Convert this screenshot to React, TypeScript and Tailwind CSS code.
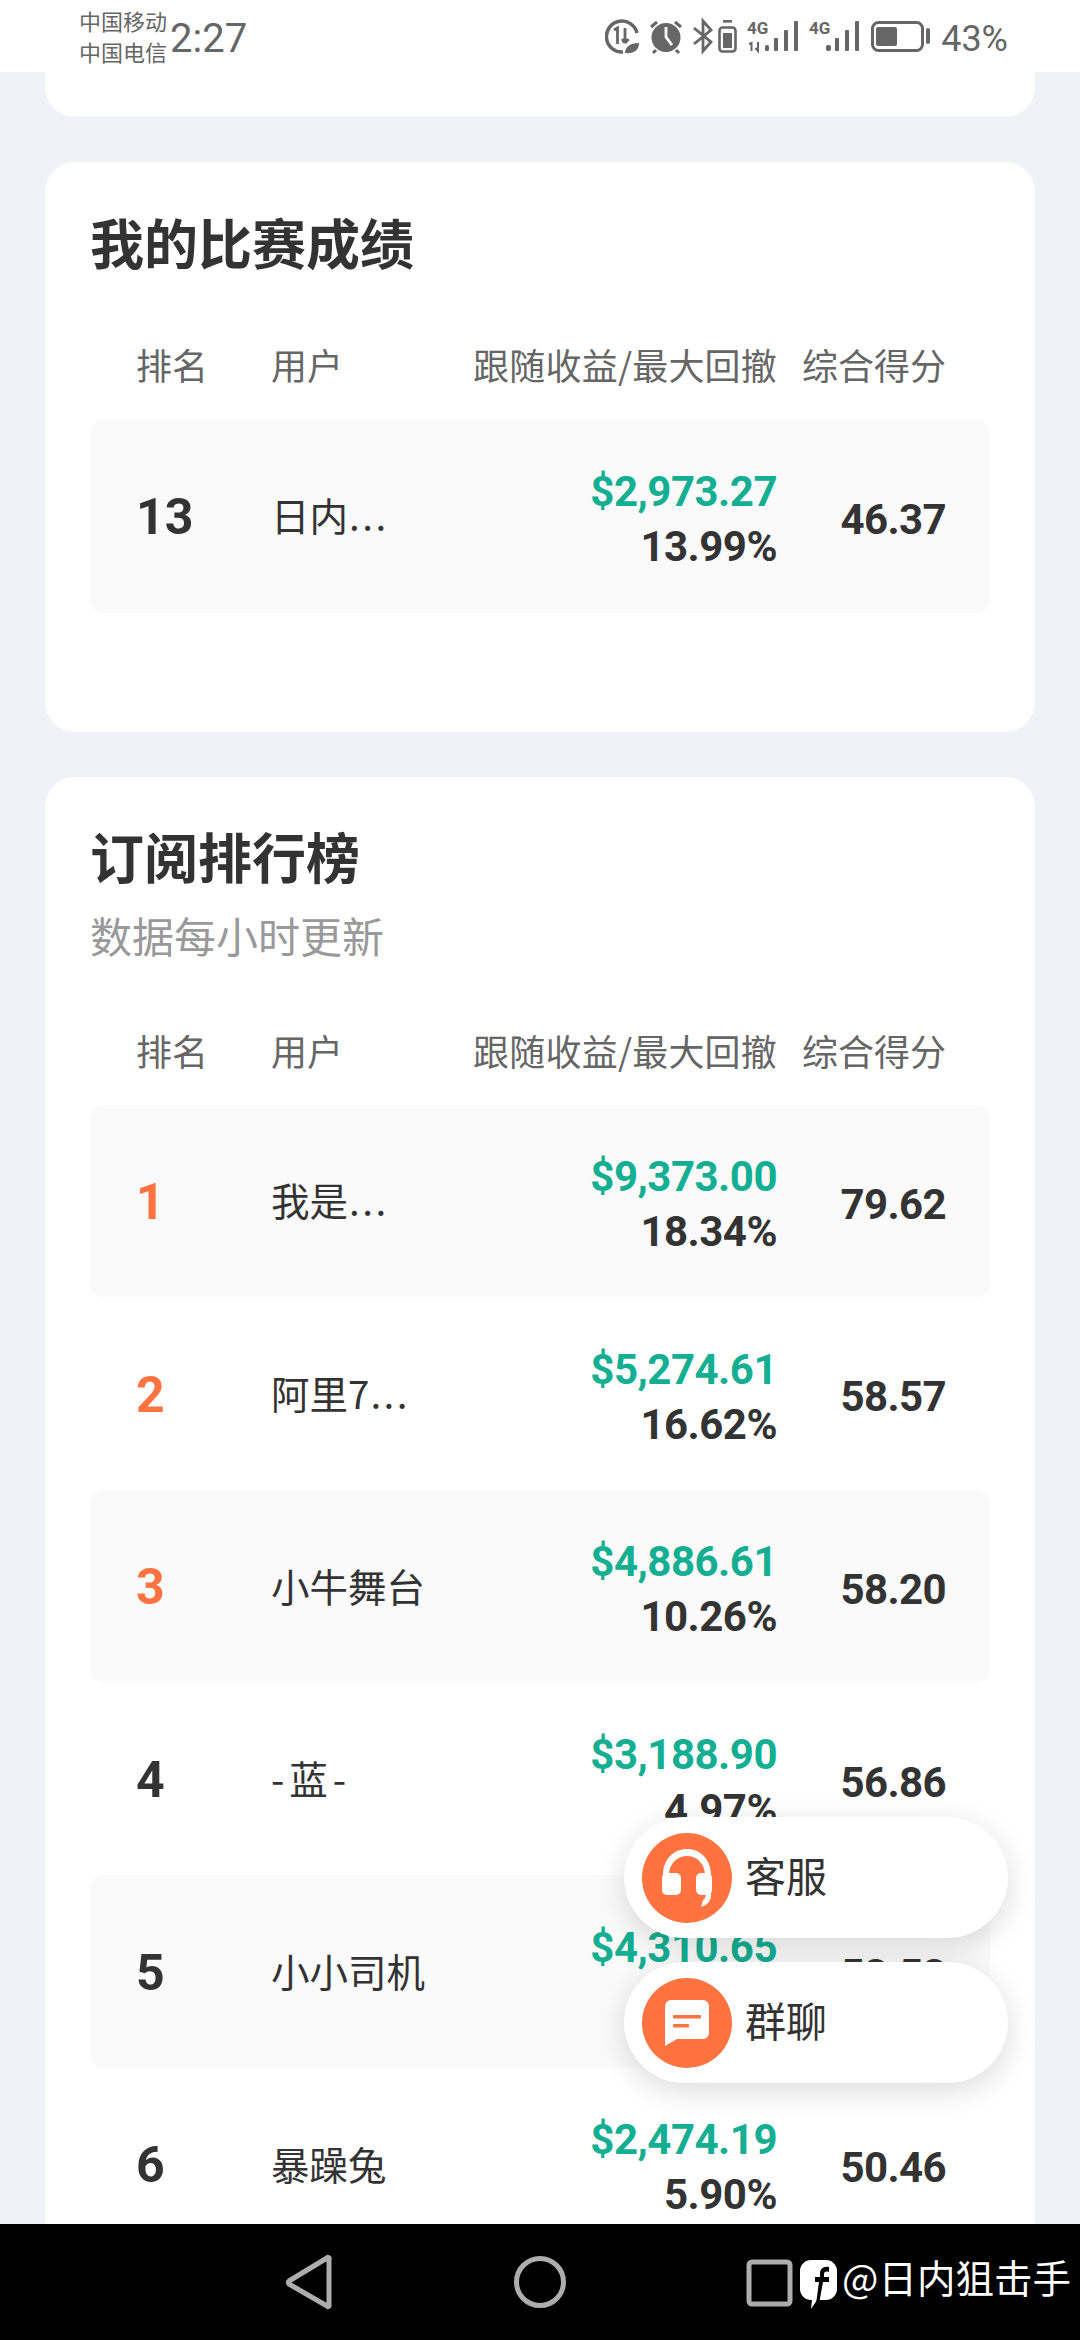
const num = { fontFamily: 'Roboto, "Noto Sans CJK SC", sans-serif' };

type Row = { rank: string; name: string; dots?: boolean; money: string; dd: string; score: string; top?: boolean };

const rows: Row[] = [
  { rank: '1', name: '我是', dots: true, money: '$9,373.00', dd: '18.34%', score: '79.62', top: true },
  { rank: '2', name: '阿里7', dots: true, money: '$5,274.61', dd: '16.62%', score: '58.57', top: true },
  { rank: '3', name: '小牛舞台', money: '$4,886.61', dd: '10.26%', score: '58.20', top: true },
  { rank: '4', name: '-蓝-', money: '$3,188.90', dd: '4.97%', score: '56.86' },
  { rank: '5', name: '小小司机', money: '$4,310.65', dd: '7.51%', score: '53.53' },
  { rank: '6', name: '暴躁兔', money: '$2,474.19', dd: '5.90%', score: '50.46' },
];

function Header() {
  return (
    <div className="grid grid-cols-[135px_190px_1fr_169px] pl-[46px] pr-[44px] h-[50px] items-center text-[36px] leading-[50px] text-[#666666] whitespace-nowrap">
      <div>排名</div>
      <div>用户</div>
      <div className="text-right tracking-[0.2px]">跟随收益/最大回撤</div>
      <div className="text-right">综合得分</div>
    </div>
  );
}

function TableRow({ r, shaded }: { r: Row; shaded: boolean }) {
  return (
    <div className={`grid grid-cols-[135px_190px_1fr_169px] pl-[46px] pr-[44px] h-[192.7px] items-center rounded-[14px] ${shaded ? 'bg-[#fafafa]' : ''}`}>
      <div className={`pt-[3px] text-[50px] font-bold ${r.top ? 'text-[#ff7340]' : 'text-[#333333]'}`} style={num}>{r.rank}</div>
      <div className={`pb-[2px] text-[38.5px] text-[#333333] whitespace-nowrap ${r.name === '-蓝-' ? 'tracking-[5px]' : ''}`}>
        {r.name}
        {r.dots ? <span className="ml-[1px] tracking-[2.5px]">...</span> : null}
      </div>
      <div className="pt-[6px] text-right font-bold text-[42px] leading-[55px] tracking-[-0.5px]" style={num}>
        <div className="text-[#14ae92]">{r.money}</div>
        <div className="text-[#333333]">{r.dd}</div>
      </div>
      <div className="pt-[6px] text-right font-bold text-[42px] text-[#333333] tracking-[-0.6px]" style={num}>{r.score}</div>
    </div>
  );
}

function StatusIcons() {
  const g = '#666666';
  return (
    <div className="flex items-center">
      <svg width="340" height="40" viewBox="604 16 340 40" fill="none">
        {/* data saver */}
        <path d="M636 33A15.5 15.5 0 1 0 622 52" stroke={g} strokeWidth="3.5" />
        <path d="M613 30l3.500-2v16M624 28v15M624 43l-3-4M624 43l3.500-4" stroke={g} strokeWidth="2.8" />
        <path d="M624 53c0-6 5-10 14-10 0 7-5 11-14 10z" fill={g} />
        {/* alarm */}
        <circle cx="665" cy="37.500" r="14.500" fill={g} />
        <path d="M650 27l6-5M680 27l-6-5M655 50l-3 3M675 50l3 3" stroke={g} strokeWidth="3" />
        <path d="M665 27v10l6 8" stroke="#ffffff" strokeWidth="2.800" />
        {/* bluetooth */}
        <path d="M693 28l17 14-8 9V21l8 9-17 14" stroke={g} strokeWidth="2.800" />
        {/* small battery */}
        <rect x="718.500" y="27.500" width="16" height="24" rx="3" stroke={g} strokeWidth="2.600" />
        <rect x="722" y="33" width="9" height="15" fill={g} />
        <rect x="722" y="20" width="9" height="2.600" fill={g} />
        {/* signal 1 */}
        <rect x="764" y="45" width="4" height="6" rx="1.500" fill={g} />
        <rect x="773" y="38" width="4" height="13" rx="1" fill={g} />
        <rect x="783" y="30" width="4" height="21" rx="1" fill={g} />
        <rect x="793" y="21" width="4" height="30" rx="1" fill={g} />
        <text x="746" y="34" fontSize="17" fontWeight="700" fill={g} fontFamily="Roboto">4G</text>
        <path d="M748 44l2.500-1v8M757 42v9l-2.500-3" stroke={g} strokeWidth="2" />
        {/* signal 2 */}
        <rect x="825" y="45" width="5" height="6" rx="2" fill={g} />
        <rect x="834" y="38" width="4" height="13" rx="1" fill={g} />
        <rect x="844" y="30" width="4" height="21" rx="1" fill={g} />
        <rect x="854" y="21" width="4" height="30" rx="1" fill={g} />
        <text x="808" y="34" fontSize="17" fontWeight="700" fill={g} fontFamily="Roboto">4G</text>
        {/* battery */}
        <rect x="871.500" y="22.500" width="50" height="28" rx="6" stroke={g} strokeWidth="3" />
        <rect x="875" y="27" width="21" height="19" rx="2" fill={g} />
        <rect x="925" y="28" width="4" height="16" rx="2" fill={g} />
      </svg>
      <span className="pt-[5px] text-[36px] text-[#666666] ml-[-4px]" style={{ fontFamily: 'Roboto, sans-serif' }}>43%</span>
    </div>
  );
}

function Fab({ label, icon }: { label: string; icon: React.ReactNode }) {
  return (
    <div className="flex items-center w-[384px] h-[121px] rounded-full bg-white pl-[18px] shadow-[0_8px_30px_rgba(0,0,0,0.14)]">
      <div className="w-[90px] h-[90px] rounded-full bg-[#ff7340] flex items-center justify-center shrink-0">{icon}</div>
      <span className="ml-[13px] pb-[5px] text-[41px] text-[#333333]">{label}</span>
    </div>
  );
}

export default function App() {
  return (
    <div
      className="relative w-[1080px] h-[2340px] overflow-hidden bg-[#f0f2f7] flex flex-col"
      style={{ fontFamily: '"Noto Sans CJK SC", sans-serif' }}
    >
      {/* status bar */}
      <div className="h-[72px] bg-white flex items-center justify-between pl-[79px] pr-[72px] shrink-0">
        <div className="flex items-center">
          <div className="text-[22px] leading-[31px] text-[#666666] whitespace-nowrap">
            <div>中国移动</div>
            <div>中国电信</div>
          </div>
          <span className="ml-[3px] pt-[5px] text-[40px] text-[#666666]" style={{ fontFamily: 'Roboto, sans-serif' }}>2:27</span>
        </div>
        <StatusIcons />
      </div>

      {/* content */}
      <div className="flex-1 min-h-0 overflow-hidden px-[45px] flex flex-col gap-[45px]">
        <div className="h-[45px] shrink-0 bg-white rounded-b-[30px]" />

        <div className="shrink-0 bg-white rounded-[30px] px-[45px] pt-[50px] pb-[119px]">
          <div className="text-[54px] leading-[60px] font-bold text-[#333333]">我的比赛成绩</div>
          <div className="mt-[67px] mb-[31px]"><Header /></div>
          <TableRow r={{ rank: '13', name: '日内', dots: true, money: '$2,973.27', dd: '13.99%', score: '46.37' }} shaded />
        </div>

        <div className="shrink-0 bg-white rounded-t-[30px] px-[45px] pt-[49px]">
          <div className="text-[54px] leading-[60px] font-bold text-[#333333]">订阅排行榜</div>
          <div className="mt-[24px] text-[42px] leading-[50px] text-[#999999]">数据每小时更新</div>
          <div className="mt-[65px] mb-[30px]"><Header /></div>
          {rows.map((r, i) => (
            <TableRow key={r.rank} r={r} shaded={i % 2 === 0} />
          ))}
        </div>
      </div>

      {/* system nav */}
      <div className="relative h-[116px] shrink-0 bg-black flex items-center">
        <svg width="1080" height="116" viewBox="0 2224 1080 116" fill="none">
          <path d="M329 2259v46a1 1 0 0 1-2 1l-38-22a2 2 0 0 1 0-3l38-23a1 1 0 0 1 2 1z" stroke="#adadad" strokeWidth="5" strokeLinejoin="round" />
          <circle cx="540" cy="2282" r="23.500" stroke="#adadad" strokeWidth="5" />
          <rect x="749" y="2262" width="41" height="42" rx="3" stroke="#adadad" strokeWidth="5" />
          <path d="M812 2260h14a11 11 0 0 1 11 11v18a11 11 0 0 1-11 11h-9l-6 9 1-9h-1a11 11 0 0 1-11-11v-18a11 11 0 0 1 11-11z" fill="#ffffff" />
          <path d="M829 2267c-6-1-9 2-9 7v3h-5v5h4l-3 22h3l4-22h6v-5h-5v-3c0-2 2-3 5-2z" fill="#000000" />
        </svg>
        <span className="absolute left-[842px] top-[27px] text-[38.5px] leading-[50px] text-white whitespace-nowrap">@日内狙击手</span>
      </div>

      {/* floating buttons */}
      <div className="absolute left-[624px] top-[1817px] flex flex-col gap-[24px]">
        <Fab
          label="客服"
          icon={
            <svg width="52" height="58" viewBox="0 0 52 58" fill="none">
              <path d="M2 26C2 10 13 0 26 0s24 10 24 26h-6C44 15 36 7 26 7S8 15 8 26z" fill="#fff" />
              <rect x="1" y="24" width="19" height="22" rx="5" fill="#fff" />
              <rect x="35" y="24" width="16" height="22" rx="5" fill="#fff" />
              <path d="M50 44c1 7-3 12-10 14l2-7c2-1 3-4 3-7z" fill="#fff" />
            </svg>
          }
        />
        <Fab
          label="群聊"
          icon={
            <svg width="46" height="48" viewBox="0 0 46 48" fill="none">
              <path d="M7 1h32a6 6 0 0 1 6 6v27a6 6 0 0 1-6 6H13L1 47V7a6 6 0 0 1 6-6z" fill="#fff" />
              <rect x="9" y="16" width="28" height="3.500" rx="1" fill="#ff7340" />
              <rect x="9" y="25" width="16" height="3.500" rx="1" fill="#ff7340" />
            </svg>
          }
        />
      </div>
    </div>
  );
}
